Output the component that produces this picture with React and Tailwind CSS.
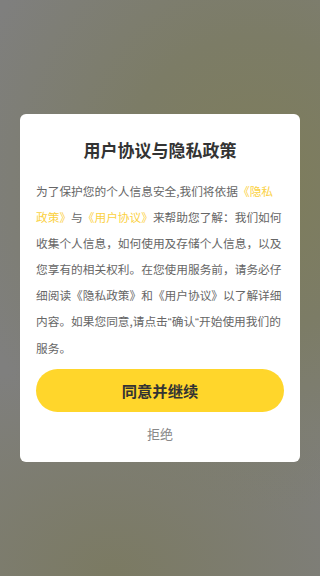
export default function App() {
  const font = { fontFamily: '"Noto Sans CJK SC", "Noto Sans", sans-serif' };
  const quote = "font-['Liberation_Sans',sans-serif]";

  return (
    <div
      className="min-h-[576px] w-full flex items-center justify-center bg-[#7f7f7e] bg-[radial-gradient(ellipse_300px_330px_at_80%_32%,#7e7d5b_0%,#7c7c66_45%,rgba(127,127,126,0)_100%),radial-gradient(ellipse_280px_220px_at_35%_100%,#7b7a62_0%,rgba(127,127,126,0)_100%)]"
      style={font}
    >
      <div className="w-[280px] bg-white rounded-md px-4 pt-[24px] pb-[18px] flex flex-col">
        <h1 className="text-center text-[17px] leading-[24px] font-bold text-[#333333]">
          用户协议与隐私政策
        </h1>

        <p className="mt-[16px] text-[11.7px] leading-[26px] text-[#666666]">
          为了保护您的个人信息安全,我们将依据
          <span className="text-[#fbd13f]">《隐私政策》</span>与
          <span className="text-[#fbd13f]">《用户协议》</span>
          来帮助您了解：我们如何收集个人信息，如何使用及存储个人信息，以及您享有的相关权利。在您使用服务前，请务必仔细阅读《隐私政策》和《用户协议》以了解详细内容。如果您同意,请点击
          <span className={quote}>“</span>确认<span className={quote}>“</span>
          开始使用我们的服务。
        </p>

        <button className="mt-[8px] h-[43px] w-full rounded-full bg-[#ffd62b] text-[15.3px] font-bold text-[#333333]">
          同意并继续
        </button>

        <button className="mt-[12px] h-[20px] text-[13px] leading-[20px] text-[#888888]">
          拒绝
        </button>
      </div>
    </div>
  );
}
